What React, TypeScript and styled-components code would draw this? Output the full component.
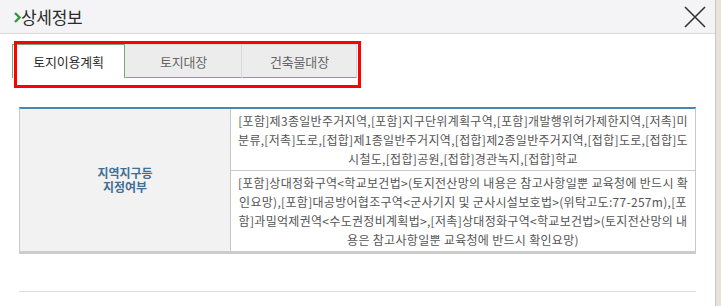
import React from "react";
import styled, { createGlobalStyle } from "styled-components";

const GlobalStyle = createGlobalStyle`
  html, body {
    margin: 0;
    padding: 0;
    background: #e8e4dc;
  }
  body {
    font-family: "Noto Sans CJK KR", "Noto Sans", sans-serif;
  }
`;

const Modal = styled.div`
  width: 716px;
  height: 306px;
  background: #fff;
  border-right: 1px solid #c9c6c0;
  box-sizing: border-box;
  overflow: hidden;
`;

const Header = styled.div`
  height: 34px;
  box-sizing: border-box;
  background: #f4f4f6;
  border-bottom: 1px solid #dadada;
  display: flex;
  align-items: center;
  justify-content: space-between;
  padding: 0 8px 0 14px;
`;

const Title = styled.h2`
  margin: 0;
  font-size: 17px;
  font-weight: 400;
  color: #2a2a2a;
  display: flex;
  align-items: center;
  letter-spacing: -0.3px;
`;

const Chevron = styled.svg`
  width: 7px;
  height: 11px;
  margin-top: 1px;
`;

const CloseButton = styled.button`
  border: 0;
  background: transparent;
  padding: 0;
  width: 24px;
  height: 24px;
  display: flex;
  align-items: center;
  justify-content: center;
  cursor: pointer;
`;

const Body = styled.div`
  padding: 10px 19px 0 19px;
`;

const TabBar = styled.div`
  position: relative;
  display: flex;
  margin-left: -7px;
`;

const Tab = styled.div<{ $active?: boolean; $w: number }>`
  width: ${(p) => p.$w}px;
  height: 34px;
  box-sizing: border-box;
  display: flex;
  align-items: center;
  justify-content: center;
  font-size: 13px;
  letter-spacing: -0.2px;
  color: ${(p) => (p.$active ? "#2d2d2d" : "#666")};
  background: ${(p) => (p.$active ? "#fff" : "#ececec")};
  border: 1px solid ${(p) => (p.$active ? "#7aa874" : "#d9d9d9")};
  border-left-color: ${(p) => (p.$active ? "#7aa874" : "transparent")};
  border-bottom: ${(p) => (p.$active ? "none" : "1px solid #7aa874")};
`;

const Highlight = styled.div`
  position: absolute;
  left: 2px;
  top: -3px;
  width: 347px;
  height: 47px;
  box-sizing: border-box;
  border: 3px solid #ff0000;
  pointer-events: none;
`;

const Table = styled.div`
  margin-top: 29px;
  display: grid;
  grid-template-columns: 211px 1fr;
  border-top: 2px solid #4a86b0;
  border-left: 1px solid #c8c8c8;
  border-right: 1px solid #c8c8c8;
  box-shadow: 0 3px 0 #cccccc;
`;

const LabelCell = styled.div<{ $rows: number }>`
  grid-row: span ${(p) => p.$rows};
  background: #f2f2f2;
  border-right: 1px solid #c8c8c8;
  display: flex;
  flex-direction: column;
  align-items: center;
  justify-content: center;
  text-align: center;
  font-size: 12px;
  font-weight: 700;
  line-height: 14px;
  color: #3f6f95;
`;

const ValueCell = styled.div<{ $last?: boolean }>`
  padding: 2px 4px;
  text-align: center;
  font-size: 12px;
  line-height: 19px;
  letter-spacing: 0.3px;
  color: #555;
  white-space: nowrap;
  border-bottom: ${(p) => (p.$last ? "none" : "1px solid #c8c8c8")};
`;

const Divider = styled.div`
  margin-top: 40px;
  height: 1px;
  background: #dcdcdc;
`;

const rowA = [
  "[포함]제3종일반주거지역,[포함]지구단위계획구역,[포함]개발행위허가제한지역,[저촉]미",
  "분류,[저촉]도로,[접합]제1종일반주거지역,[접합]제2종일반주거지역,[접합]도로,[접합]도",
  "시철도,[접합]공원,[접합]경관녹지,[접합]학교",
];

const rowB = [
  "[포함]상대정화구역<학교보건법>(토지전산망의 내용은 참고사항일뿐 교육청에 반드시 확",
  "인요망),[포함]대공방어협조구역<군사기지 및 군사시설보호법>(위탁고도:77-257m),[포",
  "함]과밀억제권역<수도권정비계획법>,[저촉]상대정화구역<학교보건법>(토지전산망의 내",
  "용은 참고사항일뿐 교육청에 반드시 확인요망)",
];

function Lines({ lines }: { lines: string[] }) {
  return (
    <>
      {lines.map((l, i) => (
        <React.Fragment key={i}>
          {l}
          {i < lines.length - 1 && <br />}
        </React.Fragment>
      ))}
    </>
  );
}

export default function App() {
  return (
    <>
      <GlobalStyle />
      <Modal>
        <Header>
          <Title>
            <Chevron viewBox="0 0 7 11">
              <path d="M1 1 L5.5 5.5 L1 10" stroke="#2f9a3a" strokeWidth="2.4" fill="none" />
            </Chevron>
            상세정보
          </Title>
          <CloseButton aria-label="닫기">
            <svg width="22" height="22" viewBox="0 0 22 22">
              <path d="M1 1 L21 21 M21 1 L1 21" stroke="#333" strokeWidth="1.6" fill="none" />
            </svg>
          </CloseButton>
        </Header>
        <Body>
          <TabBar>
            <Tab $active $w={113}>토지이용계획</Tab>
            <Tab $w={117}>토지대장</Tab>
            <Tab $w={115}>건축물대장</Tab>
            <Highlight />
          </TabBar>
          <Table>
            <LabelCell $rows={2}>
              <span>지역지구등</span>
              <span>지정여부</span>
            </LabelCell>
            <ValueCell>
              <Lines lines={rowA} />
            </ValueCell>
            <ValueCell $last>
              <Lines lines={rowB} />
            </ValueCell>
          </Table>
          <Divider />
        </Body>
      </Modal>
    </>
  );
}
